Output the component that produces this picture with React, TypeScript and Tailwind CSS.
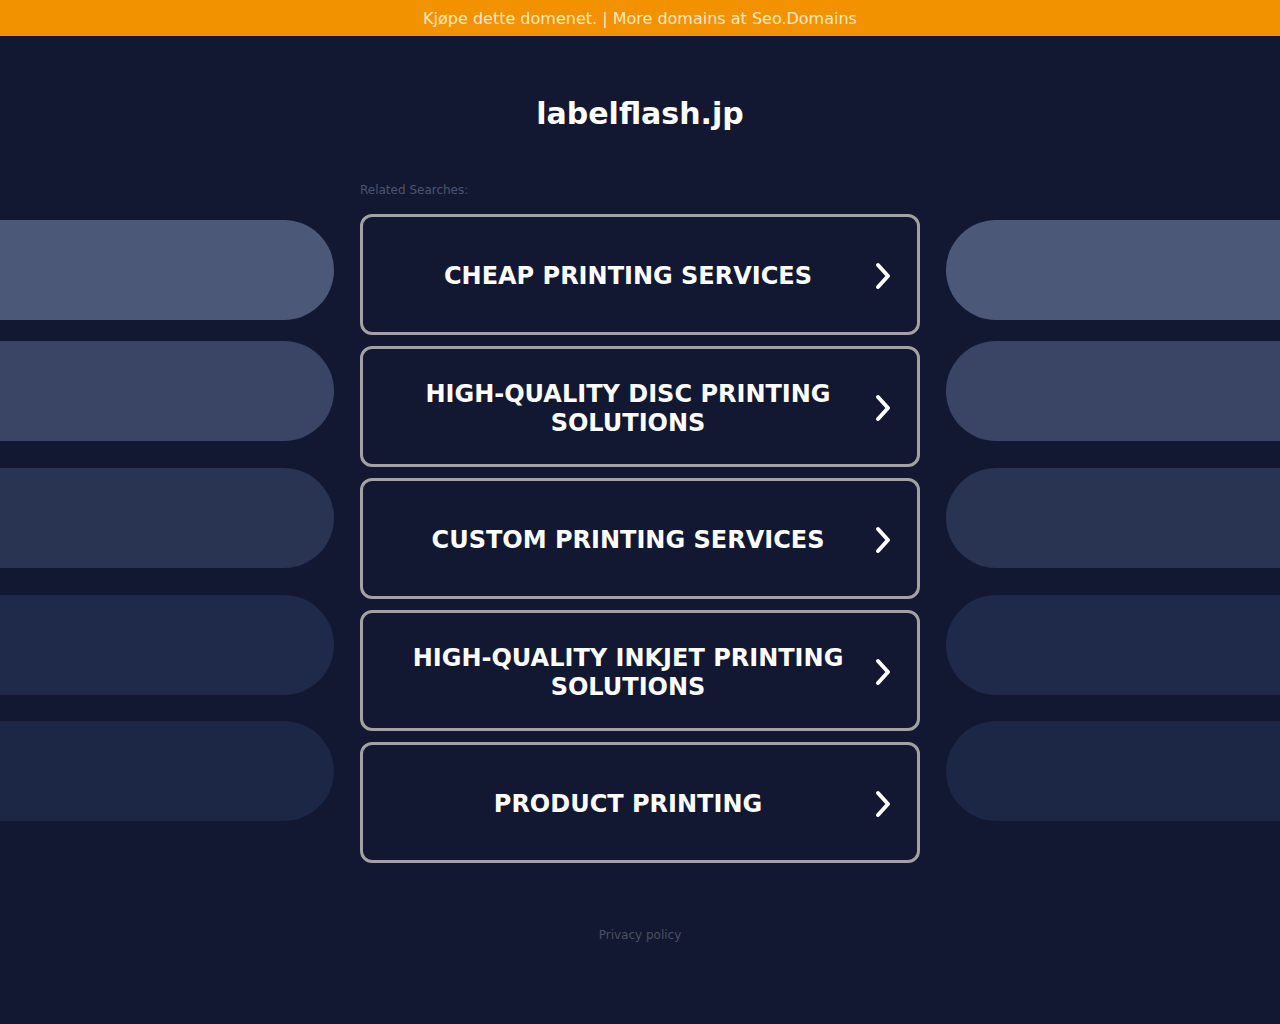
const searches = [
  'Cheap Printing Services',
  'High-Quality Disc Printing Solutions',
  'Custom Printing Services',
  'High-Quality Inkjet Printing Solutions',
  'Product Printing',
];

const pills = [
  { color: 'bg-[#4c5878]', gap: 'mt-[6px]' },
  { color: 'bg-[#3a4565]', gap: 'mt-[21px]' },
  { color: 'bg-[#293352]', gap: 'mt-[27px]' },
  { color: 'bg-[#1f2a4a]', gap: 'mt-[27px]' },
  { color: 'bg-[#1c2645]', gap: 'mt-[26px]' },
];

const Chevron = () => (
  <svg width="16" height="28" viewBox="0 0 16 28" className="mt-[2px] shrink-0">
    <path d="M3 3 L13 14 L3 25" fill="none" stroke="white" strokeWidth="4" strokeLinecap="round" strokeLinejoin="round" />
  </svg>
);

const PillColumn = ({ side }: { side: 'left' | 'right' }) => (
  <div className="flex flex-col">
    {pills.map((p) => (
      <div
        key={p.color}
        className={`${p.gap} ${p.color} h-[100px] ${side === 'left' ? 'rounded-r-full' : 'rounded-l-full'}`}
      />
    ))}
  </div>
);

export default function App() {
  return (
    <div className="min-h-[1024px] bg-[#121831] font-['DejaVu_Sans',sans-serif]">
      {/* top banner */}
      <div className="flex h-9 items-center justify-center bg-[#f39200] pt-[2px] text-[16px] text-[#fde8c2]">
        Kjøpe dette domenet. | More domains at Seo.Domains
      </div>

      <h1 className="pt-[59px] text-center text-[30px] font-bold leading-[38px] text-white">
        labelflash.jp
      </h1>

      <div className="mx-auto mt-[50px] w-[560px] text-[12px] leading-[15px] text-[#4b5472]">
        Related Searches:
      </div>

      <div className="mt-[16px] grid grid-cols-[334px_560px_334px] gap-x-[26px]">
        <PillColumn side="left" />
        <div className="flex flex-col gap-[11px]">
          {searches.map((s) => (
            <a
              key={s}
              href="#"
              className="flex h-[121px] items-center rounded-[12px] border-[3px] border-[#a2a2a2] pl-[18px] pr-[26px]"
            >
              <span className="flex-1 px-4 pt-[4px] text-center text-[24px] font-bold uppercase leading-[29px] text-white">
                {s}
              </span>
              <Chevron />
            </a>
          ))}
        </div>
        <PillColumn side="right" />
      </div>

      <div className="mt-[63px] text-center text-[12px] text-[#4b5066]">
        Privacy policy
      </div>
    </div>
  );
}
